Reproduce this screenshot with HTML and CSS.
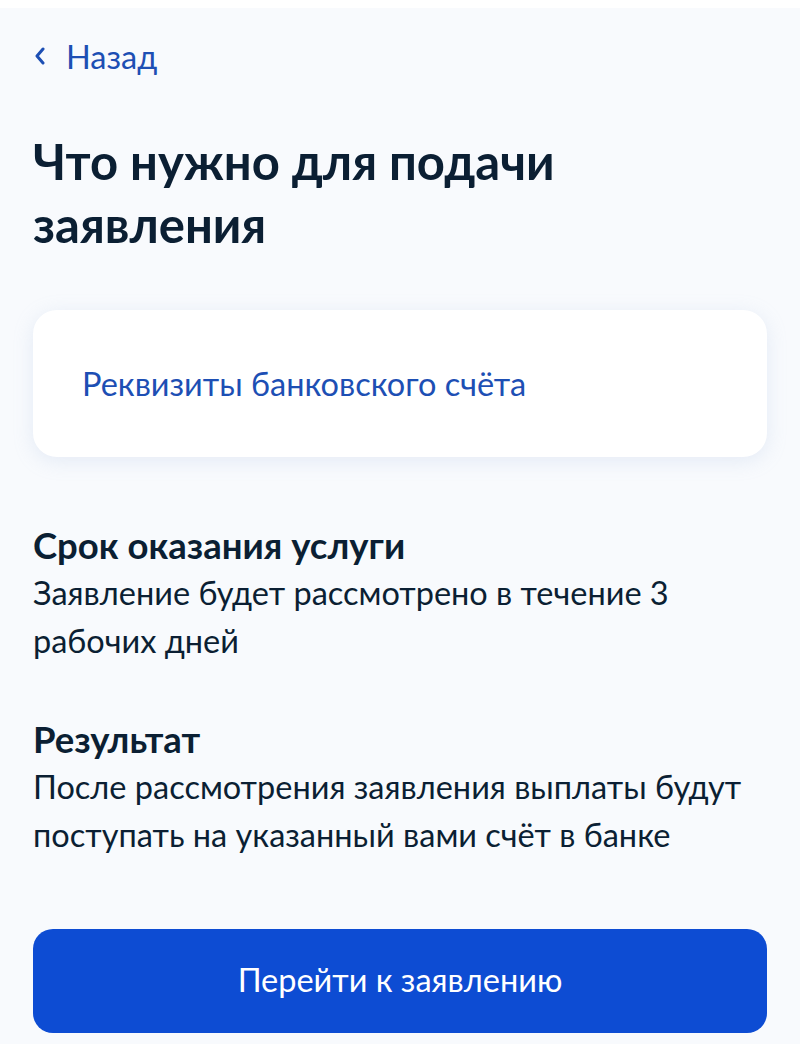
FILE: index.html
```html
<!DOCTYPE html>
<html lang="ru">
<head>
<meta charset="utf-8">
<link rel="stylesheet" href="styles.css">
</head>
<body>
<div class="topbar"></div>
<main class="page">
  <a class="back" href="#">
    <svg class="chev" width="12" height="18" viewBox="0 0 12 18"><path d="M9 2 L3 9 L9 16" fill="none" stroke="currentColor" stroke-width="3" stroke-linecap="round" stroke-linejoin="round"/></svg>
    <span>Назад</span>
  </a>
  <h1 class="title">Что нужно для подачи заявления</h1>
  <div class="card">
    <a class="card-link" href="#">Реквизиты банковского счёта</a>
  </div>
  <section class="info">
    <h2 class="info-title">Срок оказания услуги</h2>
    <p class="info-text">Заявление будет рассмотрено в течение 3 рабочих дней</p>
  </section>
  <section class="info">
    <h2 class="info-title">Результат</h2>
    <p class="info-text">После рассмотрения заявления выплаты будут поступать на указанный вами счёт в банке</p>
  </section>
  <button class="btn">Перейти к заявлению</button>
</main>
</body>
</html>
```
FILE: styles.css
```css
html, body {
  margin: 0;
  padding: 0;
  background: #f8fafd;
}
body {
  font-family: Lato, "Noto Sans", sans-serif;
  color: #0b1f33;
  width: 800px;
  height: 1044px;
  overflow: hidden;
}
.topbar {
  height: 8px;
  background: #ffffff;
}
.page {
  padding: 0 33px;
  display: flex;
  flex-direction: column;
}
.back {
  display: flex;
  align-items: center;
  gap: 20px;
  margin-top: 28px;
  height: 40px;
  color: #1d4fb4;
  text-decoration: none;
  font-size: 32.5px;
}
.chev {
  margin-left: 1px;
}
.title {
  margin: 54px 0 0;
  font-size: 49px;
  line-height: 63px;
  font-weight: 700;
  color: #0b1f33;
  max-width: 560px;
}
.card {
  margin-top: 54px;
  height: 147px;
  background: #ffffff;
  border-radius: 24px;
  box-shadow: 0 4px 20px rgba(160, 180, 220, 0.22);
  display: flex;
  align-items: center;
  padding: 0 49px;
}
.card-link {
  color: #1d4fb4;
  text-decoration: none;
  font-size: 32.5px;
}
.info:first-of-type {
  margin-top: 64px;
}
.info + .info {
  margin-top: 50px;
}
.info-title {
  margin: 0;
  font-size: 36.5px;
  line-height: 48px;
  font-weight: 700;
}
.info-text {
  margin: 0;
  font-size: 32.5px;
  line-height: 48px;
  color: #0b1f33;
}
.btn {
  margin-top: 70px;
  height: 104px;
  border: none;
  border-radius: 20px;
  background: #0d4cd3;
  color: #ffffff;
  font-family: Lato, "Noto Sans", sans-serif;
  font-size: 32.5px;
  padding-bottom: 4px;
}
```
